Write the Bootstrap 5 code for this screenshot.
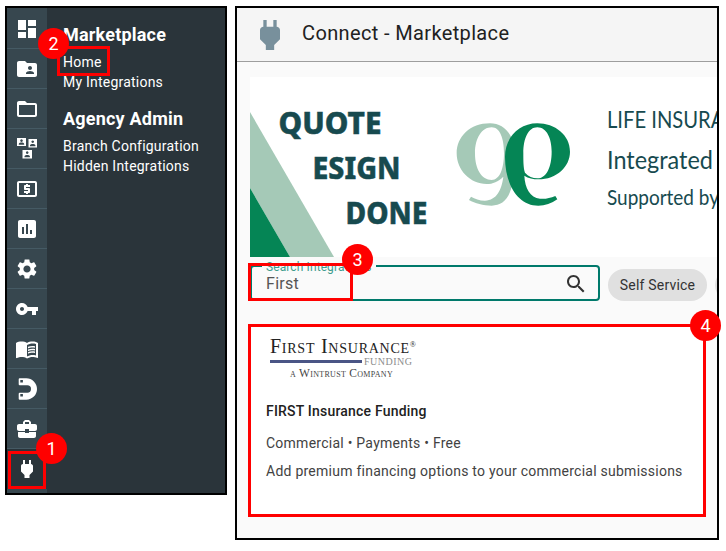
<!DOCTYPE html>
<html lang="en"><head><meta charset="utf-8"><title>Connect - Marketplace</title>
<link href="https://cdn.jsdelivr.net/npm/bootstrap@5.3.0/dist/css/bootstrap.min.css" rel="stylesheet">
<style>
html,body{margin:0;background:#fff;font-family:Roboto,sans-serif;overflow:hidden}
.stage{position:relative;width:726px;height:551px;padding:6px 0 0 5px;gap:8px}
.nav-panel{width:222px;height:489px;border:2px solid #000;background:#2a343a;color:#fff;flex:none}
.rail{width:40px;flex:none;background:#37474f;padding-top:1px}
.rail-item{height:40px;border-bottom:1px solid #455a64}
.rail-item svg{width:24px;height:24px;fill:#fff}
.rail-item.current{background:#2a343a;border:0}
.menu{padding:16px 0 0 16px}
.menu-head{font-size:18px;font-weight:700;line-height:21px;color:#fff;margin:0;letter-spacing:.2px}
.menu-link{display:block;font-size:14px;line-height:20px;color:#fff;text-decoration:none;letter-spacing:.22px}
.menu-one{margin-top:7px}
.menu-two{margin-top:16px;margin-bottom:7px}
.main-panel{width:484px;height:534px;border:2px solid #000;background:#fafafa;flex:none;overflow:hidden}
.top-bar{height:54px;background:#f5f5f5;border-bottom:1px solid #9e9e9e;padding-left:13px;gap:12px;flex:none}
.top-bar svg{width:40px;height:40px;fill:#78909c;flex:none}
.top-title{font-size:20px;font-weight:400;color:#212121;letter-spacing:.36px;margin:0 0 4px}
.page-body{padding:15px 0 0 13px;width:700px}
.banner-art{display:block;width:469px;height:180px;background:#fff}
.bn-big{font-family:"Noto Sans",sans-serif;font-weight:800;font-size:31px;fill:#174a4f;stroke:#174a4f;stroke-width:.5px}
.bn-sm{font-family:Lato,sans-serif;font-weight:400;fill:#174a4f}
.filter-row{margin-top:8px;gap:8px;align-items:center}
.search-box{position:relative;width:350px;height:36px;border:2px solid #00796b;border-radius:4px;padding:2px 10px 0 14px;background:transparent;flex:none;color:#555;font-size:16px;letter-spacing:.3px}
.search-box svg{width:24px;height:24px;fill:#333}
.search-tag{position:absolute;left:10px;top:-7px;padding:0 4px;background:#fafafa;font-size:12px;line-height:14px;color:#3f9c8d;letter-spacing:.1px}
.chip-pill{height:32px;width:99px;margin-top:4px;background:#e0e0e0;border:0;border-radius:16px;color:#333;font-size:14px;letter-spacing:.2px;padding:0;flex:none}
.chip-pill.next{width:80px}
.result-card{margin-top:25px;width:453px;height:189px;background:#fff;border:0;border-radius:0;padding:10px 16px;color:#424242}
.logo-top{font-family:"Liberation Serif",serif;font-size:20px;line-height:20px;color:#222;margin-left:4px;font-variant:small-caps;letter-spacing:.75px}
.logo-top sup{font-size:8px;top:-.8em}
.logo-mid{margin-left:4px;height:11px;gap:2px;align-items:center}
.logo-bar{width:92px;height:3px;background:#4a5585}
.logo-fund{font-family:"Liberation Serif",serif;font-size:10px;line-height:11px;color:#8c8c8c;letter-spacing:.5px}
.logo-sub{font-family:"Liberation Serif",serif;font-size:11.5px;line-height:12px;color:#444;margin:0 0 0 24px;font-variant:small-caps;letter-spacing:.3px}
.card-name{font-size:14px;font-weight:500;line-height:20px;color:#212121;margin:22px 0 12px;letter-spacing:.2px}
.card-line{font-size:14px;line-height:20px;margin:0 0 8px;letter-spacing:.25px}
.mark-box{position:absolute;border:3px solid #f00;pointer-events:none}
.mb1{left:8px;top:451px;width:38px;height:38px}
.mb2{left:57px;top:46px;width:53px;height:30px}
.mb3{left:248px;top:263px;width:105px;height:38px}
.mb4{left:248px;top:324px;width:458px;height:193px}
.mark-dot{position:absolute;width:31px;height:31px;border-radius:50%;background:#f00;color:#fff;font-size:18px;line-height:31px;text-align:center}
.md1{left:36px;top:433px}
.md2{left:38px;top:28px}
.md3{left:342px;top:244px}
.md4{left:690px;top:310px}
</style></head>
<body>
<div class="stage d-flex align-items-start">
  <aside class="nav-panel d-flex">
    <div class="rail d-flex flex-column">
      <div class="rail-item d-flex align-items-center justify-content-center"><svg viewBox="0 0 24 24"><path d="M3 13h8V3H3v10zm0 8h8v-6H3v6zm10 0h8V11h-8v10zm0-18v6h8V3h-8z"/></svg></div>
      <div class="rail-item d-flex align-items-center justify-content-center"><svg viewBox="0 0 24 24"><path d="M20 6h-8l-2-2H4c-1.1 0-1.99.9-1.99 2L2 18c0 1.1.9 2 2 2h16c1.1 0 2-.9 2-2V8c0-1.1-.9-2-2-2zm-5 3c1.1 0 2 .9 2 2s-.9 2-2 2-2-.9-2-2 .9-2 2-2zm4 8h-8v-1c0-1.33 2.67-2 4-2s4 .67 4 2v1z"/></svg></div>
      <div class="rail-item d-flex align-items-center justify-content-center"><svg viewBox="0 0 24 24"><path d="M20 6h-8l-2-2H4c-1.1 0-1.99.9-1.99 2L2 18c0 1.1.9 2 2 2h16c1.1 0 2-.9 2-2V8c0-1.1-.9-2-2-2zm0 12H4V8h16v10z"/></svg></div>
      <div class="rail-item d-flex align-items-center justify-content-center"><svg viewBox="0 0 24 24"><path fill-rule="evenodd" d="M2 1h9v8H2zM6.500 2.300a1.300 1.300 0 1 0 .01 0zM3.800 7.800h5.400V6.900c0-.9-1.800-1.300-2.700-1.300s-2.700.4-2.700 1.300zM13.500 2H22v8.500h-8.500zM17.700 3.400a1.300 1.300 0 1 0 .01 0zM15 9.200h5.400V8.200c0-.9-1.800-1.300-2.700-1.300S15 7.300 15 8.200zM7.500 13h9.500v8.500H7.500zM12.200 14.300a1.300 1.300 0 1 0 .01 0zM9.500 20.200h5.400v-1c0-.9-1.800-1.300-2.700-1.300s-2.700.4-2.700 1.300z"/></svg></div>
      <div class="rail-item d-flex align-items-center justify-content-center"><svg viewBox="0 0 24 24"><path d="M11 17h2v-1h1c.55 0 1-.45 1-1v-3c0-.55-.45-1-1-1h-3v-1h4V8h-2V7h-2v1h-1c-.55 0-1 .45-1 1v3c0 .55.45 1 1 1h3v1H9v2h2v1zm9-13H4c-1.11 0-1.99.89-1.99 2L2 18c0 1.11.89 2 2 2h16c1.11 0 2-.89 2-2V6c0-1.11-.89-2-2-2zm0 14H4V6h16v12z"/></svg></div>
      <div class="rail-item d-flex align-items-center justify-content-center"><svg viewBox="0 0 24 24"><path d="M19 3H5c-1.100 0-2 .9-2 2v14c0 1.100.9 2 2 2h14c1.100 0 2-.9 2-2V5c0-1.100-.9-2-2-2zM9 17H7v-7h2v7zm4 0h-2V7h2v10zm4 0h-2v-4h2v4z"/></svg></div>
      <div class="rail-item d-flex align-items-center justify-content-center"><svg viewBox="0 0 24 24"><path d="M19.14 12.94c.04-.3.06-.61.06-.94 0-.32-.02-.64-.07-.94l2.03-1.58c.18-.14.23-.41.12-.61l-1.92-3.32c-.12-.22-.37-.29-.59-.22l-2.39.96c-.5-.38-1.03-.7-1.62-.94l-.36-2.54c-.04-.24-.24-.41-.48-.41h-3.84c-.24 0-.43.17-.47.41l-.36 2.54c-.59.24-1.13.57-1.62.94l-2.39-.96c-.22-.08-.47 0-.59.22L2.74 8.87c-.12.21-.08.47.12.61l2.03 1.58c-.05.3-.09.63-.09.94s.02.64.07.94l-2.03 1.58c-.18.14-.23.41-.12.61l1.92 3.32c.12.22.37.29.59.22l2.39-.96c.5.38 1.03.7 1.62.94l.36 2.54c.05.24.24.41.48.41h3.84c.24 0 .44-.17.47-.41l.36-2.54c.59-.24 1.13-.56 1.62-.94l2.39.96c.22.08.47 0 .59-.22l1.92-3.32c.12-.22.07-.47-.12-.61l-2.01-1.58zM12 15.6c-1.98 0-3.6-1.62-3.6-3.6s1.62-3.6 3.6-3.6 3.6 1.62 3.6 3.6-1.62 3.6-3.6 3.6z"/></svg></div>
      <div class="rail-item d-flex align-items-center justify-content-center"><svg viewBox="0 0 24 24"><path d="M12.65 10C11.83 7.67 9.61 6 7 6c-3.31 0-6 2.69-6 6s2.69 6 6 6c2.61 0 4.83-1.67 5.65-4H17v4h4v-4h2v-4H12.65zM7 14c-1.1 0-2-.9-2-2s.9-2 2-2 2 .9 2 2-.9 2-2 2z"/></svg></div>
      <div class="rail-item d-flex align-items-center justify-content-center"><svg viewBox="0 0 24 24"><path fill-rule="evenodd" d="M21 5c-1.110-.35-2.330-.5-3.500-.5-1.950 0-4.050.4-5.500 1.500-1.450-1.100-3.550-1.500-5.500-1.500S2.450 4.900 1 6v14.650c0 .25.25.5.5.5.1 0 .15-.05.25-.05C3.100 20.450 5.050 20 6.500 20c1.950 0 4.050.4 5.500 1.500 1.350-.85 3.800-1.500 5.500-1.500 1.650 0 3.350.3 4.750 1.050.1.05.15.05.25.05.25 0 .5-.25.5-.5V6c-.6-.45-1.250-.75-2-1zm0 13.500c-1.100-.35-2.300-.5-3.500-.5-1.700 0-4.150.65-5.500 1.500V8c1.350-.85 3.800-1.500 5.500-1.500 1.200 0 2.400.15 3.500.5v11.500z"/><path d="M17.500 10.500c.88 0 1.730.09 2.500.26V9.240c-.79-.15-1.640-.24-2.500-.24-1.700 0-3.240.29-4.500.83v1.660c1.130-.64 2.700-.99 4.500-.99zM13 12.490v1.660c1.130-.64 2.700-.99 4.500-.99.88 0 1.730.09 2.500.26V11.900c-.79-.15-1.640-.24-2.500-.24-1.700 0-3.240.3-4.500.83zM17.500 14.330c-1.700 0-3.240.29-4.500.83v1.660c1.130-.64 2.700-.99 4.500-.99.88 0 1.730.09 2.500.26v-1.520c-.79-.16-1.640-.24-2.500-.24z"/></svg></div>
      <div class="rail-item d-flex align-items-center justify-content-center"><svg viewBox="0 0 24 24"><path fill-rule="evenodd" d="M4.700 1.300H11.300A10.700 10.700 0 0 1 11.300 22.700H4.700a1 1 0 0 1-1-1V16.700a1 1 0 0 1 1-1H12.300A3.700 3.700 0 0 0 12.300 8.300H4.700a1 1 0 0 1-1-1V2.300a1 1 0 0 1 1-1zM5.300 3v2.400h2.600V3zM5.300 17v2.500h2.600V17z"/></svg></div>
      <div class="rail-item d-flex align-items-center justify-content-center"><svg viewBox="0 0 24 24"><path d="M10 16v-1H3.010L3 19c0 1.110.89 2 2 2h14c1.110 0 2-.89 2-2v-4h-7v1h-4zm10-9h-4.010V5l-2-2h-4l-2 2v2H4c-1.100 0-2 .9-2 2v3c0 1.110.89 2 2 2h6v-2h4v2h6c1.100 0 2-.9 2-2V9c0-1.100-.9-2-2-2zm-6 0h-4V5h4v2z"/></svg></div>
      <div class="rail-item current d-flex align-items-center justify-content-center"><svg viewBox="0 0 24 24"><path d="M16 7V3h-2v4h-4V3H8v4h-.01C7 6.990 6 7.990 6 8.990v5.490L9.500 18v3h5v-3l3.500-3.510v-5.500c0-1-1-2-2-2z"/></svg></div>
      <div class="flex-grow-1"></div>
    </div>
    <nav class="menu">
      <h2 class="menu-head">Marketplace</h2>
      <a class="menu-link menu-one" href="#">Home</a>
      <a class="menu-link" href="#">My Integrations</a>
      <h2 class="menu-head menu-two">Agency Admin</h2>
      <a class="menu-link" href="#">Branch Configuration</a>
      <a class="menu-link" href="#">Hidden Integrations</a>
    </nav>
  </aside>
  <main class="main-panel d-flex flex-column">
    <header class="top-bar d-flex align-items-center">
      <svg viewBox="0 0 24 24"><path d="M16 7V3h-2v4h-4V3H8v4h-.01C7 6.990 6 7.990 6 8.990v5.490L9.500 18v3h5v-3l3.500-3.510v-5.500c0-1-1-2-2-2z"/></svg>
      <h1 class="top-title">Connect - Marketplace</h1>
    </header>
    <div class="page-body">
      <svg class="banner-art" viewBox="0 0 469 180">
        <polygon fill="#a5c9b7" points="0,35 84,180 40,180 0,111"/>
        <polygon fill="#058555" points="0,111 40,180 0,180"/>
        <text class="bn-big" x="28.500" y="56.500" textLength="103" lengthAdjust="spacingAndGlyphs">QUOTE</text>
        <text class="bn-big" x="62.500" y="101.500" textLength="88" lengthAdjust="spacingAndGlyphs">ESIGN</text>
        <text class="bn-big" x="95.500" y="146.500" textLength="82" lengthAdjust="spacingAndGlyphs">DONE</text>
        <g transform="translate(190,33) scale(.3333)">
          <path fill="#a5c9b7" fill-rule="evenodd" d="M150 40C90 40 50 80 50 130C50 180 90 222 140 222C158 222 175 215 190 200C185 240 170 270 135 272C118 272 105 266 93 260L87 270C105 280 130 287 155 287C200 287 225 250 225 130C225 80 195 40 150 40ZM155 52C125 52 105 85 105 130C105 178 125 210 155 210C180 210 192 175 192 130C192 85 180 52 155 52Z"/>
          <path fill="#058555" fill-rule="evenodd" d="M292 40C235 40 195 85 195 140C195 225 235 287 295 287C315 287 335 280 352 268L346 258C330 264 315 268 300 266C270 262 255 235 253 197C265 205 280 208 295 208C350 208 390 170 390 125C390 75 345 40 292 40ZM292 52C265 52 250 85 250 130C250 150 250 175 255 188C265 200 278 205 292 205C320 205 335 170 335 125C335 85 320 52 292 52Z"/>
        </g>
        <text class="bn-sm" x="357" y="51" font-size="24" textLength="158" lengthAdjust="spacingAndGlyphs">LIFE INSURANCE</text>
        <text class="bn-sm" x="357" y="92" font-size="24.500" textLength="106" lengthAdjust="spacingAndGlyphs">Integrated</text>
        <text class="bn-sm" x="357" y="128" font-size="21" textLength="112" lengthAdjust="spacingAndGlyphs">Supported by</text>
      </svg>
      <div class="filter-row d-flex">
        <div class="search-box d-flex align-items-center justify-content-between">
          <span class="search-tag">Search Integrations</span>
          <span>First</span>
          <svg viewBox="0 0 24 24"><path d="M15.500 14h-.79l-.28-.27C15.410 12.590 16 11.110 16 9.500 16 5.910 13.090 3 9.500 3S3 5.910 3 9.500 5.910 16 9.500 16c1.610 0 3.090-.59 4.230-1.570l.27.28v.79l5 4.990L20.490 19l-4.990-5zm-6 0C7.010 14 5 11.990 5 9.500S7.010 5 9.500 5 14 7.010 14 9.500 11.990 14 9.500 14z"/></svg>
        </div>
        <button type="button" class="btn chip-pill">Self Service</button>
        <button type="button" class="btn chip-pill next">&nbsp;</button>
      </div>
      <article class="card result-card">
        <div class="logo-top">First Insurance<sup>®</sup></div>
        <div class="logo-mid d-flex"><span class="logo-bar"></span><span class="logo-fund">FUNDING</span></div>
        <div class="logo-sub">a Wintrust Company</div>
        <p class="card-name">FIRST Insurance Funding</p>
        <p class="card-line">Commercial • Payments • Free</p>
        <p class="card-line">Add premium financing options to your commercial submissions</p>
      </article>
    </div>
  </main>
  <span class="mark-box mb1"></span><span class="mark-box mb2"></span><span class="mark-box mb3"></span><span class="mark-box mb4"></span>
  <span class="mark-dot md1">1</span><span class="mark-dot md2">2</span><span class="mark-dot md3">3</span><span class="mark-dot md4">4</span>
</div>
<script src="https://cdn.jsdelivr.net/npm/bootstrap@5.3.0/dist/js/bootstrap.bundle.min.js"></script>
</body></html>
